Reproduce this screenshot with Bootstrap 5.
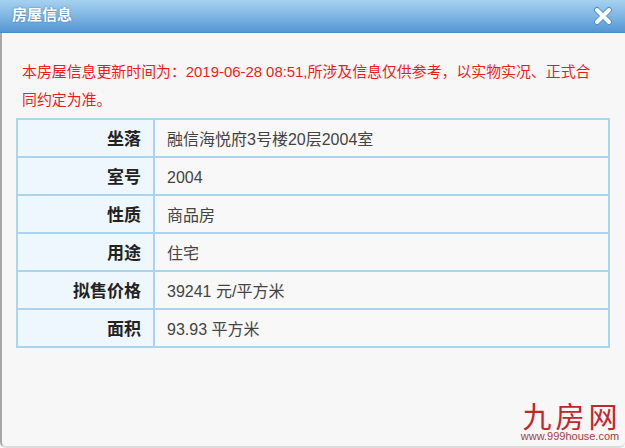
<!doctype html>
<html lang="zh">
<head>
<meta charset="utf-8">
<title>房屋信息</title>
<link rel="stylesheet" href="https://cdn.jsdelivr.net/npm/bootstrap@5.3.0/dist/css/bootstrap.min.css">
<style>
html,body{height:100%;margin:0;overflow:hidden}
body{background:#f7f7f7;font-family:"Liberation Sans","Noto Sans CJK SC",sans-serif;color:#333}
.dlg{width:625px;height:448px;background:#f7f7f7;border-left:2px solid #a8a8a8;border-bottom:2px solid #dcdcdc;border-radius:0 0 6px 6px}
.dlg-head{height:33px;margin-left:-2px;padding:0 12px 0 12px;background:linear-gradient(#a6d1f1,#7fb6e4 50%,#5596d3);border-bottom:1px solid #4a8cc9}
.dlg-title{font-size:15px;font-weight:700;color:#fff;text-shadow:0 0 2px #3a6f9f;margin-top:-2px}
.dlg-notice{font-family:"Liberation Sans","Noto Sans CJK TC",sans-serif;font-size:14.9px;line-height:28px;color:#f01c1c;margin:0;padding:25px 28px 4px 20px}
.info-tbl{width:594px;margin-left:14px;border-collapse:collapse;table-layout:fixed}
.info-tbl th,.info-tbl td{height:38px;padding:3px 12px 0;border:2px solid #a9d5f0;vertical-align:middle}
.info-tbl th{width:137px;text-align:right;background:#eef6fe;color:#222;font-weight:700;font-size:17px}
.info-tbl td{background:#f8f8f8;color:#444;font-size:16px}
.brand{position:absolute;right:5px;bottom:3px;width:100px;text-align:center;color:#c5252b}
.brand-name{font-size:29px;line-height:24px;letter-spacing:4px;margin-right:-4px;white-space:nowrap}
.brand-url{font-size:11px;line-height:13px;white-space:nowrap;color:#a83a3e}
</style>
</head>
<body>
<div class="dlg position-relative">
  <div class="dlg-head d-flex align-items-center justify-content-between">
    <span class="dlg-title">房屋信息</span>
    <svg width="20" height="20" viewBox="0 0 20 20" aria-label="关闭"><path d="M4 4 16 16M16 4 4 16" stroke="#4d8fca" stroke-width="6" stroke-linecap="round" fill="none"/><path d="M4 4 16 16M16 4 4 16" stroke="#fff" stroke-width="4" stroke-linecap="round" fill="none"/></svg>
  </div>
  <p class="dlg-notice">本房屋信息更新时间为：2019-06-28 08:51,所涉及信息仅供参考，以实物实况、正式合同约定为准。</p>
  <table class="info-tbl">
    <tr><th>坐落</th><td>融信海悦府3号楼20层2004室</td></tr>
    <tr><th>室号</th><td>2004</td></tr>
    <tr><th>性质</th><td>商品房</td></tr>
    <tr><th>用途</th><td>住宅</td></tr>
    <tr><th>拟售价格</th><td>39241 元/平方米</td></tr>
    <tr><th>面积</th><td>93.93 平方米</td></tr>
  </table>
  <div class="brand">
    <div class="brand-name">九房网</div>
    <div class="brand-url">www.999house.com</div>
  </div>
</div>
<script src="https://cdn.jsdelivr.net/npm/bootstrap@5.3.0/dist/js/bootstrap.bundle.min.js"></script>
</body>
</html>
